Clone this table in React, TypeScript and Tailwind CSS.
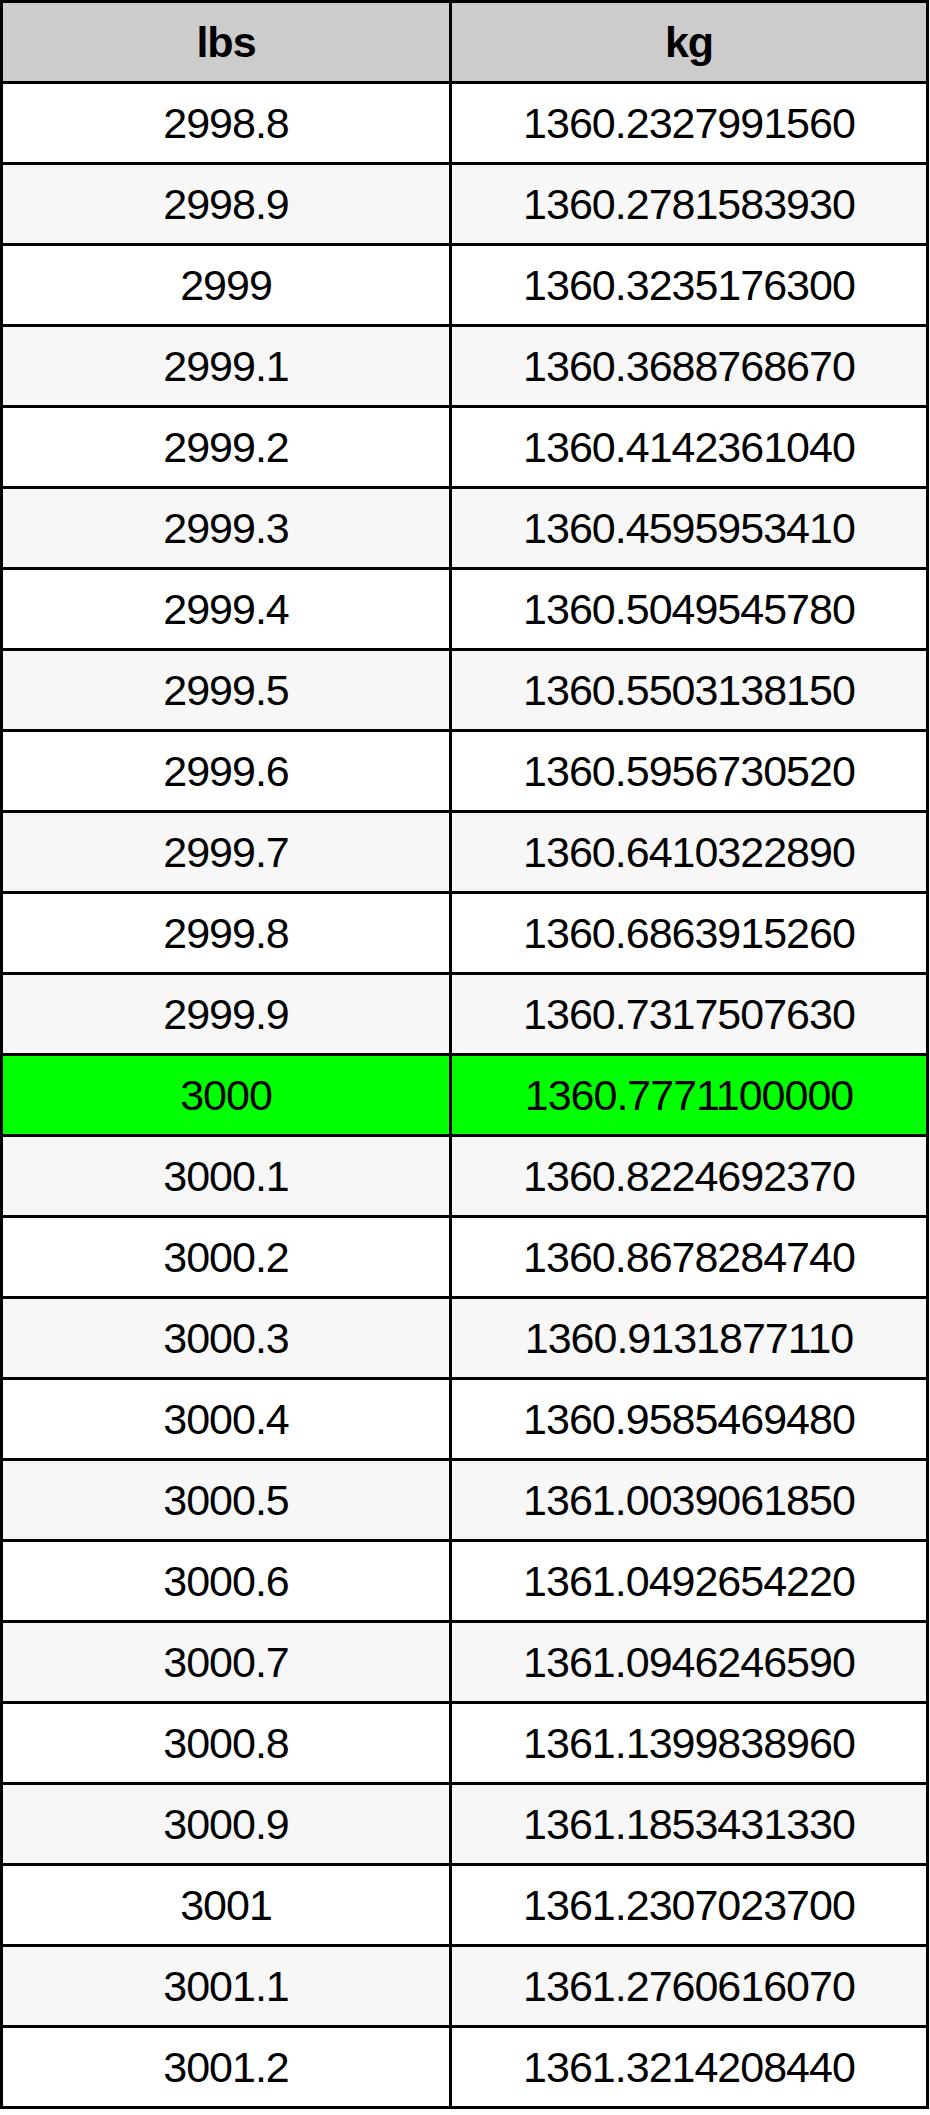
import React from 'react';

const rows: [string, string][] = [
  ['2998.8', '1360.2327991560'],
  ['2998.9', '1360.2781583930'],
  ['2999', '1360.3235176300'],
  ['2999.1', '1360.3688768670'],
  ['2999.2', '1360.4142361040'],
  ['2999.3', '1360.4595953410'],
  ['2999.4', '1360.5049545780'],
  ['2999.5', '1360.5503138150'],
  ['2999.6', '1360.5956730520'],
  ['2999.7', '1360.6410322890'],
  ['2999.8', '1360.6863915260'],
  ['2999.9', '1360.7317507630'],
  ['3000', '1360.7771100000'],
  ['3000.1', '1360.8224692370'],
  ['3000.2', '1360.8678284740'],
  ['3000.3', '1360.9131877110'],
  ['3000.4', '1360.9585469480'],
  ['3000.5', '1361.0039061850'],
  ['3000.6', '1361.0492654220'],
  ['3000.7', '1361.0946246590'],
  ['3000.8', '1361.1399838960'],
  ['3000.9', '1361.1853431330'],
  ['3001', '1361.2307023700'],
  ['3001.1', '1361.2760616070'],
  ['3001.2', '1361.3214208440'],
];

export default function App() {
  return (
    <div className="w-[930px] bg-white font-['Liberation_Sans',Arial,sans-serif] text-black">
      <table className="w-[929px] border-collapse border-[3px] border-black text-[43px] leading-none tracking-[-1px]">
        <thead>
          <tr className="bg-[#cccccc]">
            <th className="h-[81px] w-[449px] border-[3px] border-black font-bold">lbs</th>
            <th className="h-[81px] border-[3px] border-black font-bold">kg</th>
          </tr>
        </thead>
        <tbody>
          {rows.map(([lbs, kg], i) => {
            const bg = lbs === '3000' ? 'bg-[#00ff00]' : i % 2 === 1 ? 'bg-[#f7f7f7]' : 'bg-white';
            return (
              <tr key={lbs} className={bg}>
                <td className="h-[81px] border-[3px] border-black text-center">{lbs}</td>
                <td className="h-[81px] border-[3px] border-black text-center">{kg}</td>
              </tr>
            );
          })}
        </tbody>
      </table>
    </div>
  );
}
